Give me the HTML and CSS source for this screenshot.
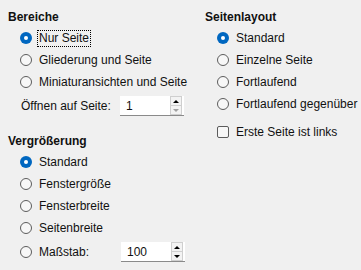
FILE: index.html
```html
<!DOCTYPE html>
<html>
<head>
<meta charset="utf-8">
<link rel="stylesheet" href="styles.css">
</head>
<body>
<div class="page">
  <div class="col col-left">
    <section class="group">
      <div class="heading">Bereiche</div>
      <div class="options">
        <div class="row"><span class="radio on"></span><span class="label focus">Nur Seite</span></div>
        <div class="row"><span class="radio"></span><span class="label">Gliederung und Seite</span></div>
        <div class="row"><span class="radio"></span><span class="label">Miniaturansichten und Seite</span></div>
        <div class="field-row">
          <span class="field-label">Öffnen auf Seite:</span>
          <div class="spin">
            <span class="spin-value">1</span>
            <span class="spin-btns">
              <span class="spin-btn"><span class="arrow up"></span></span>
              <span class="spin-btn"><span class="arrow down disabled"></span></span>
            </span>
          </div>
        </div>
      </div>
    </section>
    <section class="group group-zoom">
      <div class="heading">Vergrößerung</div>
      <div class="options">
        <div class="row"><span class="radio on"></span><span class="label">Standard</span></div>
        <div class="row"><span class="radio"></span><span class="label">Fenstergröße</span></div>
        <div class="row"><span class="radio"></span><span class="label">Fensterbreite</span></div>
        <div class="row"><span class="radio"></span><span class="label">Seitenbreite</span></div>
        <div class="row row-spin">
          <span class="radio"></span><span class="label scale-label">Maßstab:</span>
          <div class="spin">
            <span class="spin-value">100</span>
            <span class="spin-btns">
              <span class="spin-btn"><span class="arrow up"></span></span>
              <span class="spin-btn"><span class="arrow down"></span></span>
            </span>
          </div>
        </div>
      </div>
    </section>
  </div>
  <div class="col col-right">
    <section class="group">
      <div class="heading">Seitenlayout</div>
      <div class="options">
        <div class="row"><span class="radio on"></span><span class="label">Standard</span></div>
        <div class="row"><span class="radio"></span><span class="label">Einzelne Seite</span></div>
        <div class="row"><span class="radio"></span><span class="label">Fortlaufend</span></div>
        <div class="row"><span class="radio"></span><span class="label">Fortlaufend gegenüber</span></div>
        <div class="row row-check"><span class="check"></span><span class="label">Erste Seite ist links</span></div>
      </div>
    </section>
  </div>
</div>
</body>
</html>
```
FILE: styles.css
```css
html, body {
  margin: 0;
  padding: 0;
  background: #f0f0f0;
}
body {
  font-family: "Liberation Sans", Arial, sans-serif;
  font-size: 12px;
  color: #111;
  width: 361px;
  height: 270px;
  overflow: hidden;
  white-space: nowrap;
}
.page {
  display: flex;
  padding: 7px 0 0 8px;
}
.col-left {
  width: 197px;
  display: flex;
  flex-direction: column;
}
.col-right {
  flex: 1;
}
.heading {
  font-weight: bold;
  height: 20px;
  line-height: 20px;
}
.options {
  display: flex;
  flex-direction: column;
  padding-left: 12px;
}
.row {
  height: 22px;
  display: flex;
  align-items: center;
}
.radio {
  width: 12px;
  height: 12px;
  box-sizing: border-box;
  border-radius: 50%;
  border: 1px solid #5c5c5c;
  background: #f7f7f7;
  flex: none;
  position: relative;
}
.radio.on {
  border: none;
  background: #0067c0;
}
.radio.on::after {
  content: "";
  position: absolute;
  left: 4px;
  top: 4px;
  width: 4px;
  height: 4px;
  border-radius: 50%;
  background: #fff;
}
.label {
  line-height: 15px;
  padding: 0 1px;
  border: 1px dotted transparent;
  margin-left: 5px;
}
.label.focus {
  border-color: #000;
}
.field-row {
  display: flex;
  align-items: center;
  margin-top: 3px;
  margin-left: 1px;
}
.field-label {
  width: 99px;
}
.spin {
  width: 64px;
  height: 20px;
  box-sizing: border-box;
  background: #fff;
  border-bottom: 1px solid #8a8a8a;
  display: flex;
  align-items: center;
  padding-left: 6px;
}
.spin-value {
  flex: 1;
}
.spin-btns {
  display: flex;
  flex-direction: column;
  margin-right: 2px;
  width: 10px;
  border: 1px solid #cfcfcf;
  background: #f3f3f3;
}
.spin-btn {
  height: 8px;
  display: flex;
  align-items: center;
  justify-content: center;
}
.spin-btn + .spin-btn {
  border-top: 1px solid #cfcfcf;
}
.arrow {
  width: 0;
  height: 0;
  border-left: 3px solid transparent;
  border-right: 3px solid transparent;
}
.arrow.up {
  border-bottom: 3px solid #000;
}
.arrow.down {
  border-top: 3px solid #000;
}
.arrow.down.disabled {
  border-top-color: #a0a0a0;
}
.group-zoom {
  margin-top: 15px;
}
.row-spin .scale-label {
  width: 80px;
}
.row-spin {
  height: 24px;
  margin-top: 1px;
}
.row-check {
  margin-top: 6px;
}
.check {
  width: 12px;
  height: 12px;
  box-sizing: border-box;
  border: 1px solid #5c5c5c;
  border-radius: 2px;
  background: #f7f7f7;
  flex: none;
}
```
